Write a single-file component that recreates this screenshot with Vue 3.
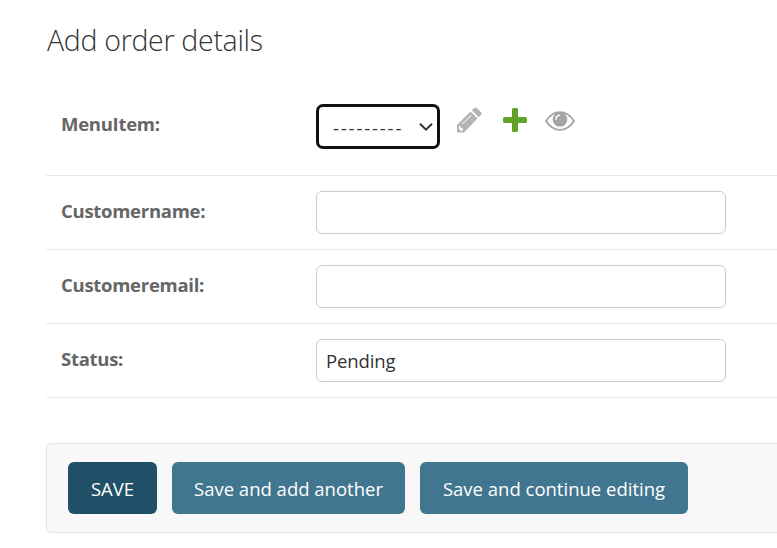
<script setup>
import { ref } from 'vue'

const menuItem = ref('')
const fields = ref([
  { id: 'customername', label: 'Customername:', value: '' },
  { id: 'customeremail', label: 'Customeremail:', value: '' },
  { id: 'status', label: 'Status:', value: 'Pending' },
])
</script>

<template>
  <main class="page">
    <h1>Add order details</h1>
    <form @submit.prevent>
      <div class="row row-menu">
        <label for="menuitem">MenuItem:</label>
        <div class="related">
          <div class="select-box">
            <select id="menuitem" v-model="menuItem">
              <option value="">---------</option>
            </select>
            <svg class="chevron" width="16" height="12" viewBox="0 0 16 12">
              <path d="M2 2.7l6 6 6-6" fill="none" stroke="#333" stroke-width="2" />
            </svg>
          </div>
          <svg class="icon pencil" width="28" height="28" viewBox="0 0 28 28">
            <path d="M2 26.500v-7.500L15.5 5.500l7 7L9 26.500z" fill="#b4b4b4" />
            <path d="M16.8 4.200L19.400 2q1.200-1 2.400 0l4.300 4.300q1.200 1.200 0 2.400l-2.300 2.500z" fill="#b4b4b4" />
            <path d="M4 20l1.500.2.3 2 2 .4.2 1.500-1.800 1-2.200-2z" fill="#fff" />
            <path d="M7.200 18.200L16.500 9" stroke="#e8e8e8" stroke-width="1.100" fill="none" />
          </svg>
          <svg class="icon plus" width="24" height="24" viewBox="0 0 24 24">
            <path d="M10.500 0h3q1.500 0 1.500 1.500V9h7.500q1.500 0 1.500 1.500v3q0 1.500-1.500 1.500H15v7.500q0 1.500-1.500 1.500h-3Q9 24 9 22.500V15H1.500Q0 15 0 13.500v-3Q0 9 1.500 9H9V1.500Q9 0 10.500 0z" fill="#5fa225" />
          </svg>
          <svg class="icon eye" width="30" height="20" viewBox="0 0 30 20">
            <path d="M1 10C5 4 9.700 1.100 15 1.100S25 4 29 10C25 16 20.300 18.900 15 18.900S5 16 1 10z" fill="#fff" stroke="#a5a5a5" stroke-width="1.900" />
            <circle cx="15" cy="8.500" r="7.300" fill="#a5a5a5" />
            <path d="M11 8.300Q11 4.700 14.500 4.300" fill="none" stroke="#fff" stroke-width="1.500" stroke-linecap="round" />
          </svg>
        </div>
      </div>
      <div v-for="f in fields" :key="f.id" class="row">
        <label :for="f.id">{{ f.label }}</label>
        <input :id="f.id" v-model="f.value" type="text" />
      </div>
      <div class="submit-row">
        <button class="save">SAVE</button>
        <button class="another">Save and add another</button>
        <button class="continue">Save and continue editing</button>
      </div>
    </form>
  </main>
</template>

<style>
body {
  background: #fff;
  overflow: hidden;
}
</style>

<style scoped>
.page {
  padding: 21px 0 0 46px;
  height: 548px;
  box-sizing: border-box;
  overflow: hidden;
  font-family: 'Open Sans', 'Noto Sans', sans-serif;
  font-size: 18.500px;
  color: #333;
}
h1 {
  margin: 0;
  height: 68px;
  padding-left: 1px;
  font-size: 28.500px;
  font-weight: 300;
  line-height: 38px;
  letter-spacing: -0.300px;
  white-space: nowrap;
}
.row {
  display: flex;
  align-items: flex-start;
  height: 74px;
  padding: 15px 0 0 15px;
  box-sizing: border-box;
  border-bottom: 1px solid #e8e8e8;
}
.row-menu {
  height: 87px;
}
label {
  flex: 0 0 255px;
  padding-top: 5px;
  line-height: 30px;
  font-size: 18.500px;
  font-weight: 700;
  color: #666;
  letter-spacing: -0.280px;
}
input {
  width: 410px;
  height: 43px;
  box-sizing: border-box;
  border: 1px solid #ccc;
  border-radius: 6px;
  padding: 0 9px 1px;
  background: #fff;
  color: #333;
  font: inherit;
  letter-spacing: -0.100px;
  outline: none;
}
.related {
  display: flex;
  align-items: flex-start;
}
.select-box {
  display: grid;
  align-items: center;
  width: 124px;
  height: 45px;
}
select,
.chevron {
  grid-area: 1 / 1;
}
select {
  appearance: none;
  width: 124px;
  height: 45px;
  border: 3px solid #101010;
  border-radius: 7px;
  padding: 1px 0 0 14px;
  background: #fff;
  color: #333;
  font: inherit;
  letter-spacing: 1.850px;
  outline: none;
}
.chevron {
  justify-self: end;
  margin-right: 6px;
  pointer-events: none;
}
.pencil {
  margin: 2px 0 0 15px;
}
.plus {
  margin: 4px 0 0 20px;
}
.eye {
  margin: 7px 0 0 18px;
}
.submit-row {
  display: flex;
  gap: 15px;
  width: 900px;
  height: 90px;
  box-sizing: border-box;
  margin-top: 45px;
  padding: 18px 21px;
  border: 1px solid #e8e8e8;
  border-radius: 6px;
  background: #f8f8f8;
}
button {
  height: 52px;
  padding: 0;
  border: 0;
  border-radius: 6px;
  background: #417690;
  color: #fff;
  font: inherit;
  white-space: nowrap;
}
.save {
  width: 89px;
  background: #205067;
}
.another {
  width: 233px;
}
.continue {
  width: 268px;
}
</style>
